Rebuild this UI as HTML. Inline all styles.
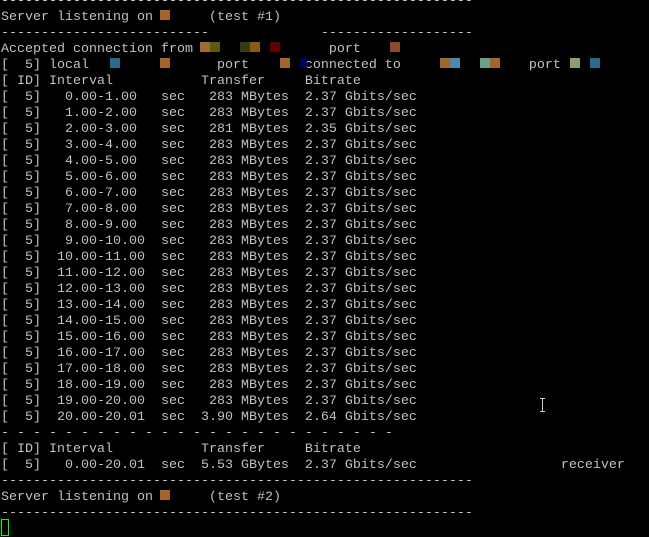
<!DOCTYPE html>
<html><head><style>
html,body{margin:0;padding:0;background:#000;width:649px;height:537px;overflow:hidden}
pre{position:absolute;left:1px;top:-6px;margin:0;font-family:"Liberation Mono",monospace;font-size:13.33px;line-height:16px;color:#c0c0c0}
.b{position:absolute;height:10px;width:10px}
</style></head><body>
<pre>-----------------------------------------------------------
Server listening on       (test #1)
--------------------------              -------------------
Accepted connection from                 port
[  5] local                port       connected to                port
[ ID] Interval           Transfer     Bitrate
[  5]   0.00-1.00   sec   283 MBytes  2.37 Gbits/sec
[  5]   1.00-2.00   sec   283 MBytes  2.37 Gbits/sec
[  5]   2.00-3.00   sec   281 MBytes  2.35 Gbits/sec
[  5]   3.00-4.00   sec   283 MBytes  2.37 Gbits/sec
[  5]   4.00-5.00   sec   283 MBytes  2.37 Gbits/sec
[  5]   5.00-6.00   sec   283 MBytes  2.37 Gbits/sec
[  5]   6.00-7.00   sec   283 MBytes  2.37 Gbits/sec
[  5]   7.00-8.00   sec   283 MBytes  2.37 Gbits/sec
[  5]   8.00-9.00   sec   283 MBytes  2.37 Gbits/sec
[  5]   9.00-10.00  sec   283 MBytes  2.37 Gbits/sec
[  5]  10.00-11.00  sec   283 MBytes  2.37 Gbits/sec
[  5]  11.00-12.00  sec   283 MBytes  2.37 Gbits/sec
[  5]  12.00-13.00  sec   283 MBytes  2.37 Gbits/sec
[  5]  13.00-14.00  sec   283 MBytes  2.37 Gbits/sec
[  5]  14.00-15.00  sec   283 MBytes  2.37 Gbits/sec
[  5]  15.00-16.00  sec   283 MBytes  2.37 Gbits/sec
[  5]  16.00-17.00  sec   283 MBytes  2.37 Gbits/sec
[  5]  17.00-18.00  sec   283 MBytes  2.37 Gbits/sec
[  5]  18.00-19.00  sec   283 MBytes  2.37 Gbits/sec
[  5]  19.00-20.00  sec   283 MBytes  2.37 Gbits/sec
[  5]  20.00-20.01  sec  3.90 MBytes  2.64 Gbits/sec
- - - - - - - - - - - - - - - - - - - - - - - - -
[ ID] Interval           Transfer     Bitrate
[  5]   0.00-20.01  sec  5.53 GBytes  2.37 Gbits/sec                  receiver
-----------------------------------------------------------
Server listening on       (test #2)
-----------------------------------------------------------</pre>
<div class="b" style="left:160px;top:10px;background:#a0662a"></div>
<div class="b" style="left:200px;top:42px;background:#a06a30"></div>
<div class="b" style="left:210px;top:42px;background:#5a5a10"></div>
<div class="b" style="left:240px;top:42px;background:#3a3a10"></div>
<div class="b" style="left:250px;top:42px;background:#8a5a10"></div>
<div class="b" style="left:270px;top:42px;background:#600000"></div>
<div class="b" style="left:390px;top:42px;background:#8a4a30"></div>
<div class="b" style="left:110px;top:58px;background:#2a6a8a"></div>
<div class="b" style="left:160px;top:58px;background:#a0662a"></div>
<div class="b" style="left:280px;top:58px;background:#a0662a"></div>
<div class="b" style="left:300px;top:58px;width:7px;background:#000060"></div>
<div class="b" style="left:440px;top:58px;background:#a0662a"></div>
<div class="b" style="left:450px;top:58px;background:#4a8aaa"></div>
<div class="b" style="left:480px;top:58px;background:#6aa08a"></div>
<div class="b" style="left:490px;top:58px;background:#a0662a"></div>
<div class="b" style="left:570px;top:58px;background:#8aa06a"></div>
<div class="b" style="left:590px;top:58px;background:#2a6a8a"></div>
<div class="b" style="left:160px;top:490px;background:#a0662a"></div>
<div style="position:absolute;left:1px;top:519px;width:6px;height:15px;border:1px solid #00ff00"></div>
<div style="position:absolute;left:542px;top:398px;width:1px;height:14px;background:#ccc"></div>
<div style="position:absolute;left:540px;top:398px;width:5px;height:1px;background:#ccc"></div>
<div style="position:absolute;left:540px;top:411px;width:5px;height:1px;background:#ccc"></div>
</body></html>
